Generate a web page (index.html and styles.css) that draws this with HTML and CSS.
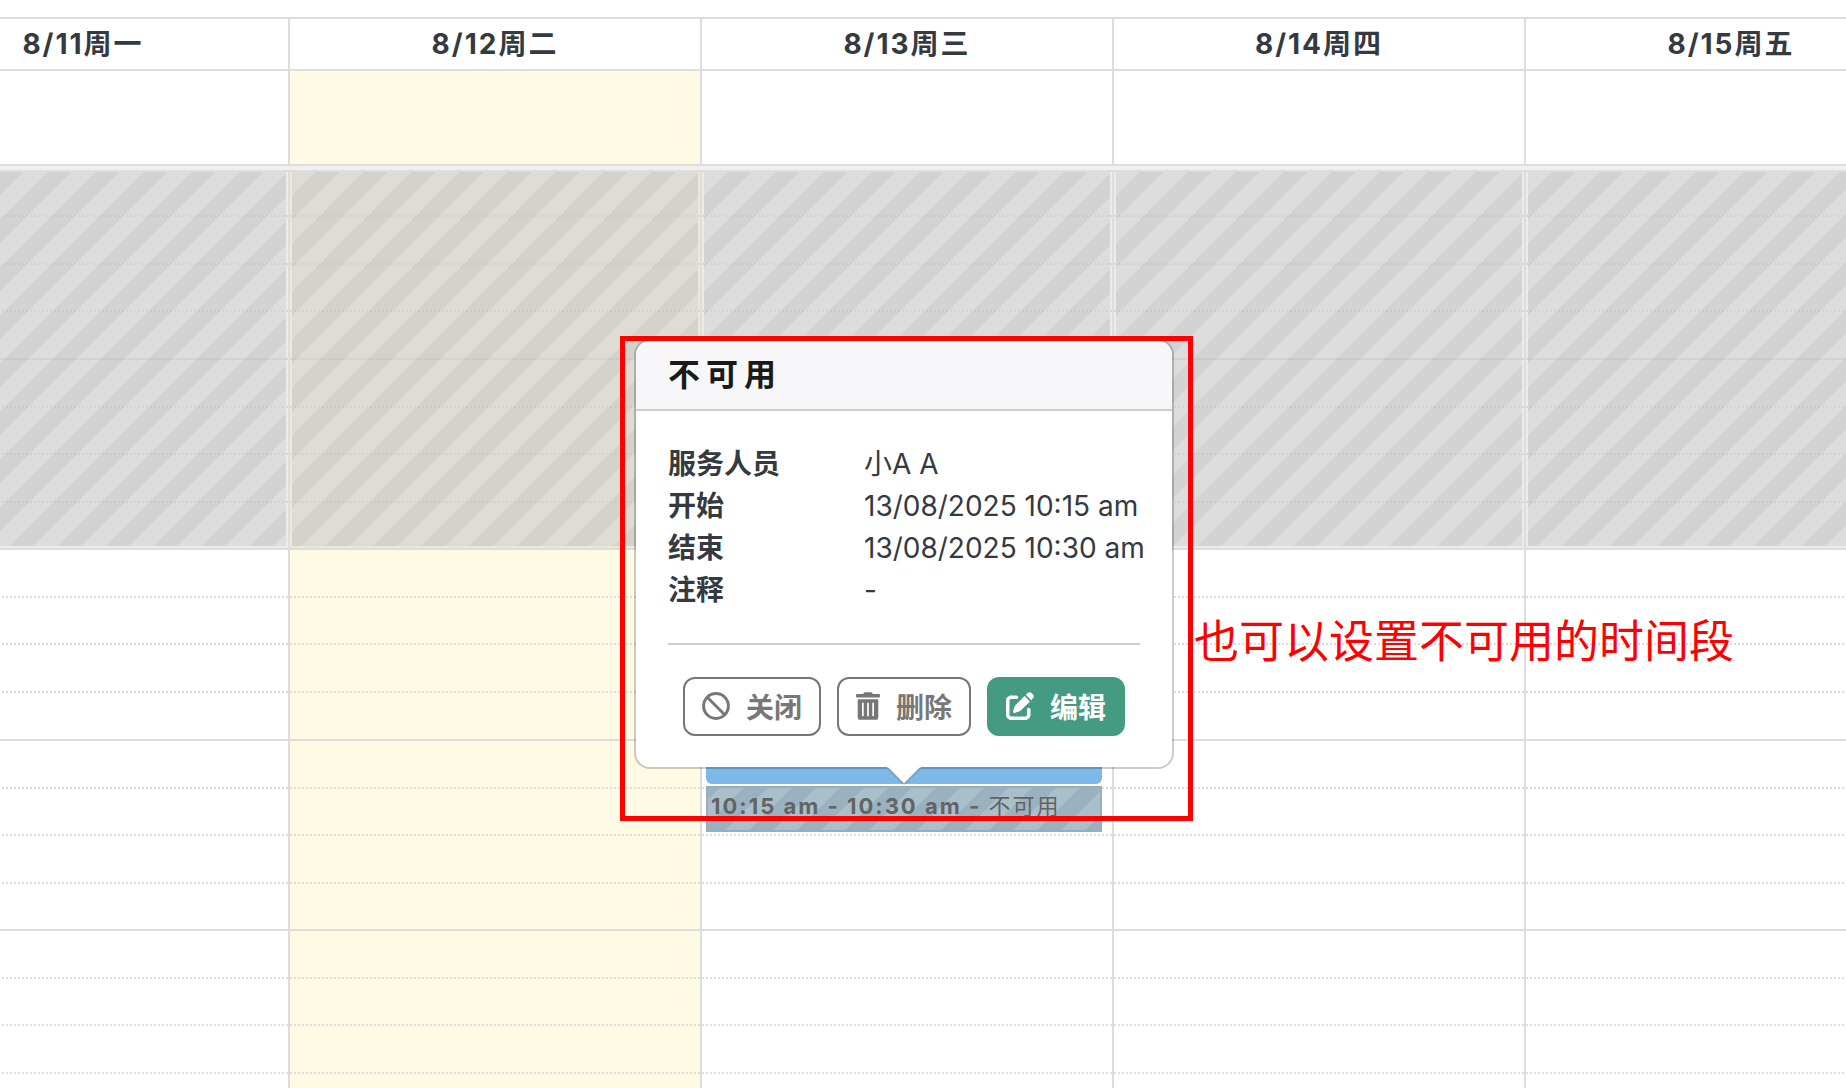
FILE: index.html
```html
<!DOCTYPE html>
<html lang="zh-CN">
<head>
    <meta charset="UTF-8">
    <meta name="viewport" content="width=device-width, initial-scale=1.0">
    <title>日历</title>
    <link rel="stylesheet" href="styles.css">
</head>
<body>
    <div class="calendar">
        <div class="row header">
            <div class="cell">8/11周一</div>
            <div class="cell">8/12周二</div>
            <div class="cell">8/13周三</div>
            <div class="cell">8/14周四</div>
            <div class="cell">8/15周五</div>
        </div>
        <div class="row all-day">
            <div class="cell"></div>
            <div class="cell today"></div>
            <div class="cell"></div>
            <div class="cell"></div>
            <div class="cell"></div>
        </div>
        <div class="divider"></div>
        <div class="time-grid">
            <div class="row backdrop">
                <div class="cell"></div>
                <div class="cell today"></div>
                <div class="cell"></div>
                <div class="cell"></div>
                <div class="cell"></div>
            </div>
            <div class="slots">
                <div class="hour first"><div class="slot"></div><div class="slot"></div><div class="slot"></div><div class="slot"></div></div>
                <div class="hour"><div class="slot"></div><div class="slot"></div><div class="slot"></div><div class="slot"></div></div>
                <div class="hour"><div class="slot"></div><div class="slot"></div><div class="slot"></div><div class="slot"></div></div>
                <div class="hour"><div class="slot"></div><div class="slot"></div><div class="slot"></div><div class="slot"></div></div>
                <div class="hour"><div class="slot"></div><div class="slot"></div><div class="slot"></div><div class="slot"></div></div>
            </div>
            <div class="row columns">
                <div class="cell"><div class="closed"></div></div>
                <div class="cell"><div class="closed"></div></div>
                <div class="cell">
                    <div class="closed"></div>
                    <div class="events">
                        <div class="event"></div>
                        <div class="event unavailable"><strong>10:15 am - 10:30 am - </strong>不可用</div>

                        <div class="popover" role="dialog" aria-labelledby="popover-title">
                            <h3 id="popover-title">不可用</h3>
                            <div class="popover-body">
                                <dl>
                                    <dt>服务人员</dt>
                                    <dd>小A A</dd>
                                    <dt>开始</dt>
                                    <dd>13/08/2025 10:15 am</dd>
                                    <dt>结束</dt>
                                    <dd>13/08/2025 10:30 am</dd>
                                    <dt>注释</dt>
                                    <dd>-</dd>
                                </dl>
                                <hr>
                                <div class="buttons">
                                    <button type="button" class="btn">
                                        <svg width="28" height="28" viewBox="0 0 28 28" fill="none" stroke="currentColor" stroke-width="3"><circle cx="14" cy="14" r="12.4"/><path d="M5.3 5.3l17.4 17.4"/></svg>
                                        关闭
                                    </button>
                                    <button type="button" class="btn">
                                        <svg width="24" height="28" viewBox="0 0 448 512" fill="currentColor"><path d="M32 464a48 48 0 0 0 48 48h288a48 48 0 0 0 48-48V128H32zm272-256a16 16 0 0 1 32 0v224a16 16 0 0 1-32 0zm-96 0a16 16 0 0 1 32 0v224a16 16 0 0 1-32 0zm-96 0a16 16 0 0 1 32 0v224a16 16 0 0 1-32 0zM432 32H312l-9.400-18.700A24 24 0 0 0 281.100 0H166.800a23.720 23.720 0 0 0-21.400 13.300L136 32H16A16 16 0 0 0 0 48v32a16 16 0 0 0 16 16h416a16 16 0 0 0 16-16V48a16 16 0 0 0-16-16z"/></svg>
                                        删除
                                    </button>
                                    <button type="button" class="btn primary">
                                        <svg width="28" height="28" viewBox="0 0 512 512" fill="currentColor"><path d="M471.600 21.700c-21.900-21.900-57.300-21.900-79.200 0L362.300 51.700l97.900 97.900 30.100-30.100c21.900-21.900 21.900-57.300 0-79.200zM172.400 241.700c-6.100 6.100-10.800 13.600-13.500 21.900l-29.600 88.800c-2.900 8.600-.6 18.100 5.800 24.600s15.900 8.700 24.600 5.800l88.800-29.600c8.200-2.700 15.700-7.400 21.900-13.500L437.700 172.300 339.700 74.300zM96 64c-53 0-96 43-96 96v256c0 53 43 96 96 96h256c53 0 96-43 96-96v-96c0-17.700-14.300-32-32-32s-32 14.300-32 32v96c0 17.700-14.300 32-32 32H96c-17.700 0-32-14.300-32-32V160c0-17.700 14.300-32 32-32h96c17.700 0 32-14.300 32-32s-14.300-32-32-32z"/></svg>
                                        编辑
                                    </button>
                                </div>
                            </div>
                            <svg class="arrow" width="34" height="18" viewBox="0 0 34 18"><path d="M0 0h34L17 17z" fill="#fff"/><path d="M1 1l16 16L33 1" fill="none" stroke="#000" stroke-opacity=".2" stroke-width="2"/></svg>
                        </div>

                        <div class="highlight"></div>
                        <div class="note">也可以设置不可用的时间段</div>
                    </div>
                </div>
                <div class="cell"><div class="closed"></div></div>
                <div class="cell"><div class="closed"></div></div>
            </div>
        </div>
    </div>
</body>
</html>
```
FILE: styles.css
```css
* {
    box-sizing: border-box;
}
body {
    margin: 0;
    height: 100vh;
    overflow: hidden;
    background-color: #fff;
    color: #343a40;
    font-family: Inter, "Noto Sans CJK SC", sans-serif;
    font-size: 28px;
}
/* the week is wider than the window, both ends are cut off */
.calendar {
    margin: 17px -92px 0 -122px;
}
.row {
    display: grid;
    grid-template-columns: repeat(5, 1fr);
}
.cell {
    min-width: 0;
    border-right: 2px solid #ddd;
}
.header {
    border-top: 2px solid #ddd;
    border-bottom: 2px solid #ddd;
}
.header .cell {
    height: 50px;
    line-height: 50px;
    text-align: center;
    font-weight: 700;
    letter-spacing: 2px;
}
.all-day {
    height: 93px;
}
.today {
    background-color: #fffae3;
}
.divider {
    height: 8px;
    border-top: 2px solid #ddd;
    border-bottom: 2px solid #ddd;
    background-color: #f0f0f0;
}

/* time grid */
.time-grid {
    display: grid;
}
.backdrop,
.slots,
.columns {
    grid-area: 1 / 1;
}
.columns .cell {
    position: relative;
}
.hour {
    display: grid;
    grid-template-rows: 46px 47px 48px 48px;
    border-top: 2px solid #ddd;
}
.hour:nth-child(even) {
    grid-template-rows: 46px 47px 48px 47px;
}
.hour.first {
    grid-template-rows: 43px 48px 47px 48px;
    border-top: 0;
}
.slot + .slot {
    background: linear-gradient(90deg, #ddd 50%, transparent 50%) 0 0 / 4px 2px repeat-x;
}
.closed {
    height: 376px;
    border: 2px solid rgba(206, 206, 206, 0.4);
    border-top: 0;
    background: linear-gradient(135deg, rgba(206, 206, 206, 0.7) 25%, rgba(192, 192, 192, 0.7) 25%, rgba(192, 192, 192, 0.7) 50%, rgba(206, 206, 206, 0.7) 50%, rgba(206, 206, 206, 0.7) 75%, rgba(192, 192, 192, 0.7) 75%) 0 0 / 48px 48px;
    background-clip: padding-box;
}

/* events */
.events {
    position: absolute;
    top: 569px;
    left: 4px;
    right: 10px;
    z-index: 1;
}
.event {
    height: 43px;
    margin-bottom: 2px;
    border-radius: 6px;
    background-color: #7cb9e8;
}
.event.unavailable {
    height: 46px;
    margin-bottom: 0;
    padding-left: 3px;
    border: 2px solid #98aebf;
    border-radius: 0;
    background: linear-gradient(135deg, #a9bfca 25%, #9ab2c0 25%, #9ab2c0 50%, #a9bfca 50%, #a9bfca 75%, #9ab2c0 75%) 12px 0 / 48px 48px;
    color: #636363;
    font-size: 22px;
    line-height: 36px;
    letter-spacing: 2px;
    white-space: nowrap;
}

/* popover */
.popover {
    position: absolute;
    bottom: 63px;
    left: 50%;
    width: 540px;
    margin-left: -270px;
    border: 2px solid rgba(0, 0, 0, 0.2);
    border-radius: 16px;
    background-color: #fff;
    background-clip: padding-box;
}
.popover h3 {
    margin: 0;
    padding: 12px 32px;
    border-bottom: 2px solid #ccc;
    border-radius: 14px 14px 0 0;
    background-color: #f7f7f9;
    color: #1a1a1a;
    font-size: 32px;
    line-height: 44px;
    font-weight: 700;
    letter-spacing: 6px;
}
.popover-body {
    padding: 32px 32px 31px;
}
.popover dl {
    display: grid;
    grid-template-columns: 196px 1fr;
    margin: 0;
    line-height: 42px;
    white-space: nowrap;
}
.popover dt {
    font-weight: 700;
}
.popover dd {
    margin: 0;
}
.popover hr {
    margin: 32px 0;
    border: 0;
    border-top: 2px solid #ccc;
}
.buttons {
    display: flex;
    justify-content: center;
    gap: 16px;
}
.btn {
    display: flex;
    align-items: center;
    gap: 16px;
    height: 59px;
    padding: 0 17px 1px;
    border: 2px solid #777;
    border-radius: 12px;
    background-color: #fff;
    color: #777;
    font-family: inherit;
    font-size: 28px;
    font-weight: 700;
    white-space: nowrap;
}
.btn.primary {
    border-color: #459a82;
    background-color: #459a82;
    color: #fff;
}
.arrow {
    position: absolute;
    top: 100%;
    left: 50%;
    margin-left: -17px;
}

/* red annotation */
.highlight {
    position: absolute;
    top: -405px;
    left: -86px;
    right: -91px;
    height: 485px;
    border: 5px solid #f00;
}
.note {
    position: absolute;
    top: -131px;
    left: calc(100% + 92px);
    color: #f00;
    font-size: 45px;
    line-height: 64px;
    white-space: nowrap;
}
```
